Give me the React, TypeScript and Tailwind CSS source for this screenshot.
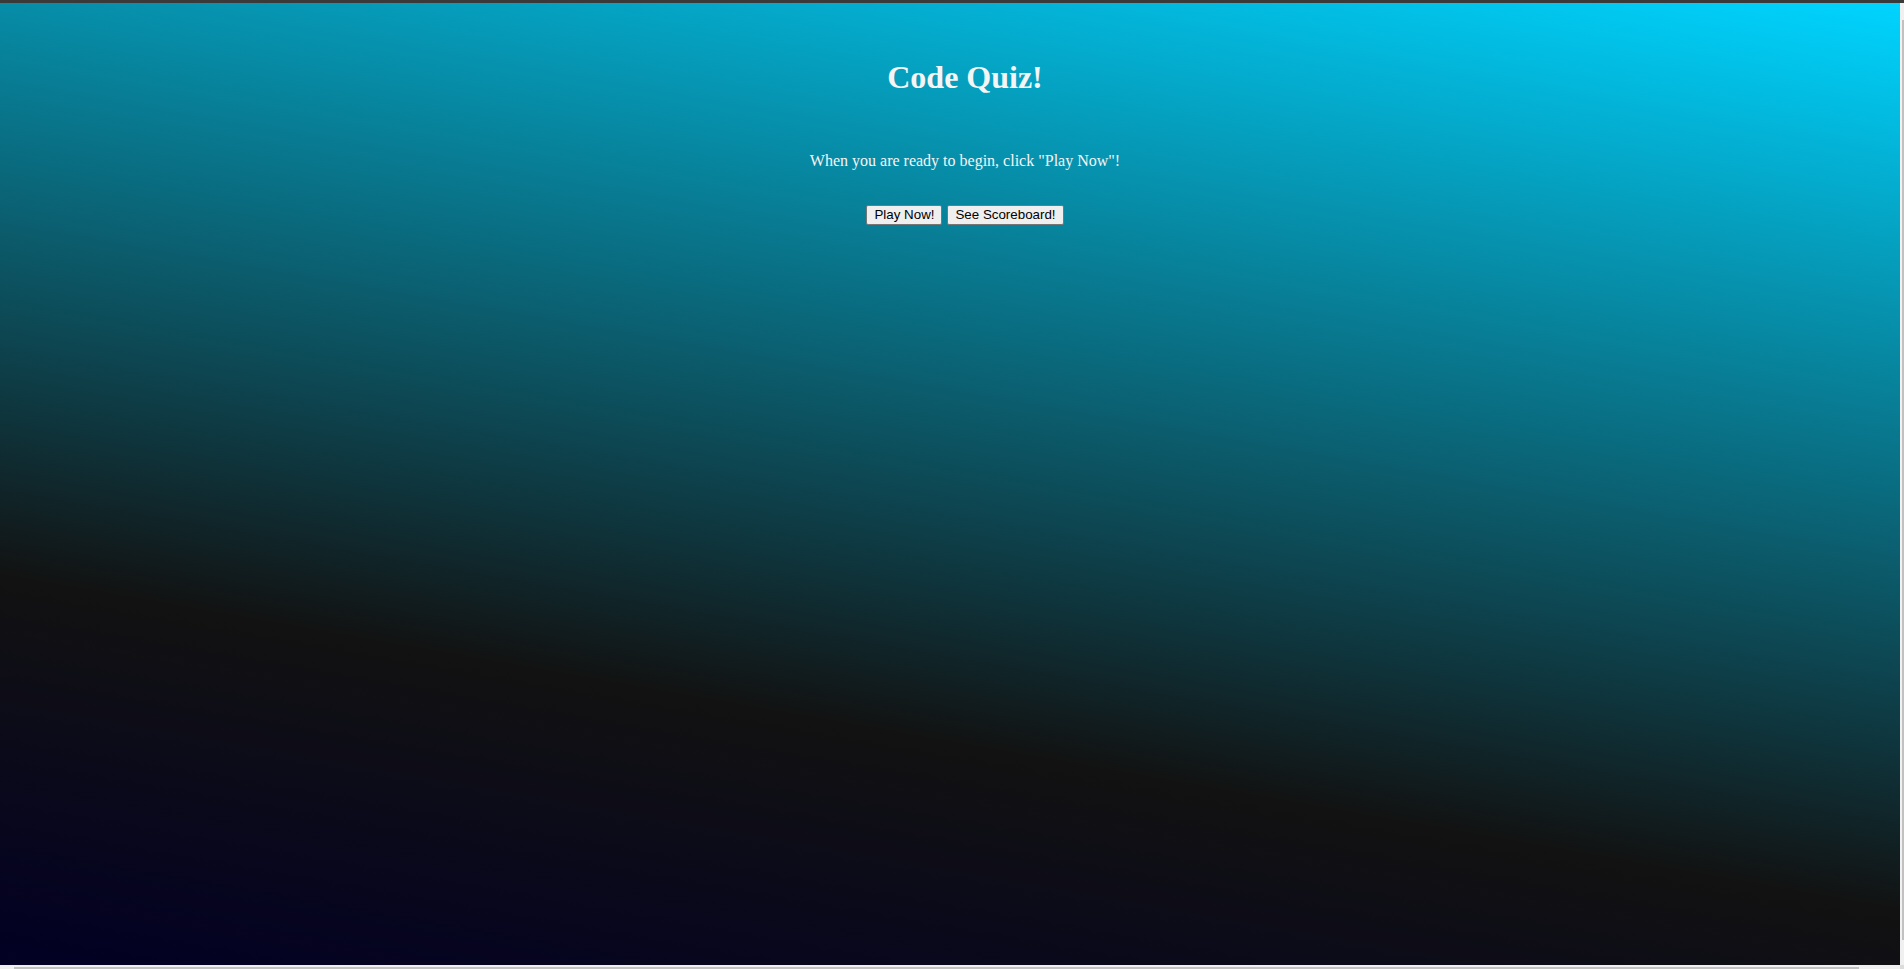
import React from "react";

export default function App() {
  return (
    <div className="flex h-[969px] w-full flex-col overflow-hidden bg-[#f0f0f0]">
      <div className="h-[3px] w-full shrink-0 bg-[#3a3a3a]" />
      <div className="flex min-h-0 flex-1">
        <div className="flex-1 bg-[linear-gradient(10deg,#020024_0%,#121212_30%,#00d4ff_100%)]">
          <div className="flex flex-col items-center pl-[30px] text-white">
            <h1 className="mt-[56px] font-['Liberation_Serif',serif] text-[32px] font-bold leading-[37px] text-[#f5f5f5]">
              Code Quiz!
            </h1>
            <p className="mt-[56px] font-['Liberation_Serif',serif] text-[16px] leading-[18px] text-[#f5f5f5]">
              When you are ready to begin, click "Play Now"!
            </p>
            <div className="mt-[35px] flex gap-[5px]">
              <button className="h-[20px] rounded-[2px] border border-[#767676] bg-[#efefef] px-[7px] font-['Liberation_Sans',Arial,sans-serif] text-[13.33px] leading-[16px] text-black">
                Play Now!
              </button>
              <button className="h-[20px] rounded-[2px] border border-[#767676] bg-[#efefef] px-[7px] font-['Liberation_Sans',Arial,sans-serif] text-[13.33px] leading-[16px] text-black">
                See Scoreboard!
              </button>
            </div>
          </div>
        </div>
        <div className="flex w-[4px] shrink-0 bg-[#f0f0f0] pt-[17px] pb-[25px]">
          <div className="ml-[2px] w-[2px] bg-[#c1c1c1]" />
        </div>
      </div>
      <div className="flex h-[4px] shrink-0">
        <div className="flex-1 bg-[#f0f0f0] pt-[2px] pl-[14px] pr-[41px]">
          <div className="h-[2px] w-full bg-[#c1c1c1]" />
        </div>
        <div className="w-[4px] bg-[#dcdcdc]" />
      </div>
    </div>
  );
}
